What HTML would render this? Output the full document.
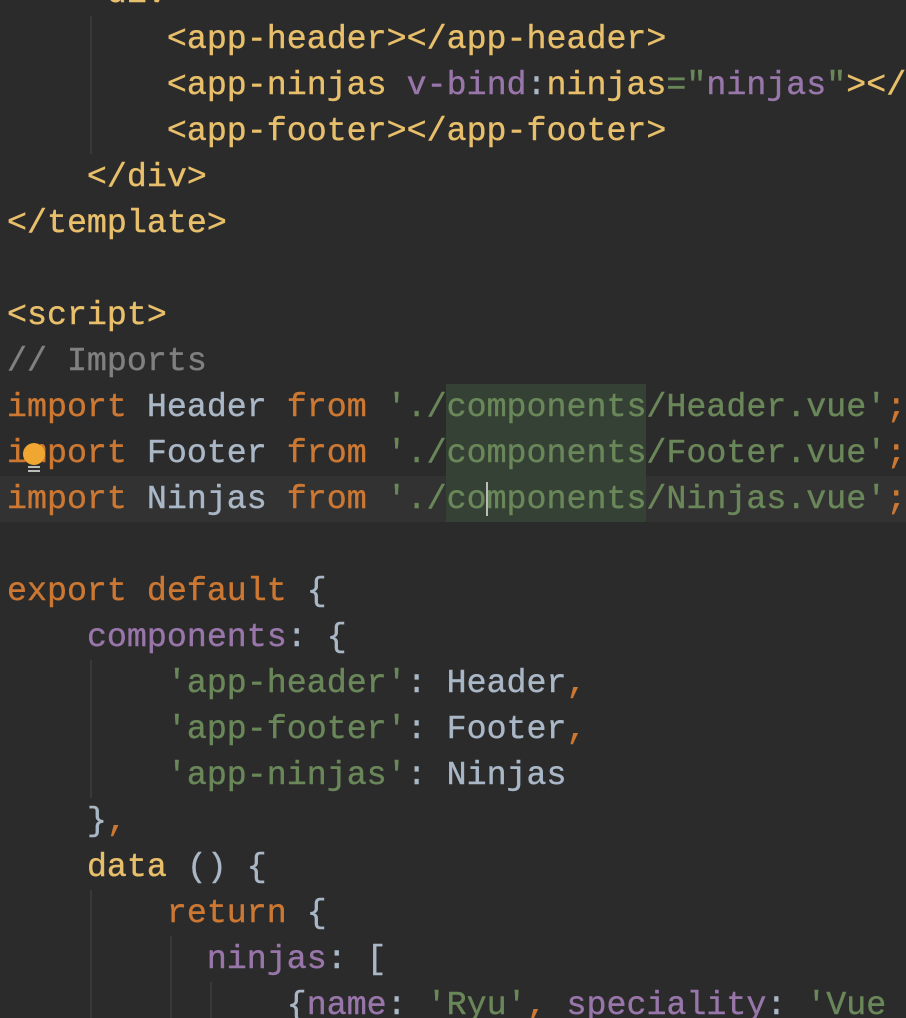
<!DOCTYPE html>
<html><head><style>
html,body{margin:0;padding:0;width:906px;height:1018px;overflow:hidden;background:#2b2b2b}
#w{position:absolute;left:0;top:0;width:906px;height:1018px;overflow:hidden}
.l{position:absolute;left:7px;height:46px;line-height:46px;font-family:"Liberation Mono",monospace;font-size:33.3px;white-space:pre;color:#a9b7c6;-webkit-text-stroke:0.4px currentColor}
.t{color:#e8bf6a}.k{color:#cc7832}.s{color:#6a8759}.p{color:#9876aa}.c{color:#808080}
.g{position:absolute;width:2px;background:#393939}
</style></head><body><div id="w">
<div style="position:absolute;left:0;top:476px;width:906px;height:46px;background:#323232"></div>
<div style="position:absolute;left:446px;top:384px;width:200px;height:138px;background:#344134"></div>
<div class="g" style="left:90px;top:16px;height:138px"></div>
<div class="g" style="left:90px;top:660px;height:138px"></div>
<div class="g" style="left:90px;top:890px;height:128px"></div>
<div class="g" style="left:170px;top:936px;height:82px"></div>
<div class="g" style="left:210px;top:982px;height:36px"></div>
<div class="l t" style="top:-30px">    &lt;div&gt;</div>
<div class="l t" style="top:16px">        &lt;app-header&gt;&lt;/app-header&gt;</div>
<div class="l" style="top:62px"><span class="t">        &lt;app-ninjas </span><span class="p">v-bind</span>:<span class="t">ninjas</span><span class="s">="</span><span class="p">ninjas</span><span class="s">"</span><span class="t">&gt;&lt;/</span></div>
<div class="l t" style="top:108px">        &lt;app-footer&gt;&lt;/app-footer&gt;</div>
<div class="l t" style="top:154px">    &lt;/div&gt;</div>
<div class="l t" style="top:200px">&lt;/template&gt;</div>
<div class="l t" style="top:292px">&lt;script&gt;</div>
<div class="l c" style="top:338px">// Imports</div>
<div class="l" style="top:384px"><span class="k">import</span> Header <span class="k">from</span> <span class="s">'./components/Header.vue'</span><span class="k">;</span></div>
<div class="l" style="top:430px"><span class="k">import</span> Footer <span class="k">from</span> <span class="s">'./components/Footer.vue'</span><span class="k">;</span></div>
<div class="l" style="top:476px"><span class="k">import</span> Ninjas <span class="k">from</span> <span class="s">'./components/Ninjas.vue'</span><span class="k">;</span></div>
<div style="position:absolute;left:486px;top:482px;width:2px;height:34px;background:#bbb"></div>
<div style="position:absolute;left:23px;top:443px;width:22px;height:22px;border-radius:50%;background:#f0a732"></div>
<div style="position:absolute;left:28px;top:466px;width:12px;height:2px;background:#bbb"></div>
<div style="position:absolute;left:28px;top:470px;width:12px;height:2px;background:#bbb"></div>
<div class="l" style="top:568px"><span class="k">export default</span> {</div>
<div class="l" style="top:614px">    <span class="p">components</span>: {</div>
<div class="l" style="top:660px">        <span class="s">'app-header'</span>: Header<span class="k">,</span></div>
<div class="l" style="top:706px">        <span class="s">'app-footer'</span>: Footer<span class="k">,</span></div>
<div class="l" style="top:752px">        <span class="s">'app-ninjas'</span>: Ninjas</div>
<div class="l" style="top:798px">    }<span class="k">,</span></div>
<div class="l" style="top:844px">    <span class="t">data</span> () {</div>
<div class="l" style="top:890px">        <span class="k">return</span> {</div>
<div class="l" style="top:936px">          <span class="p">ninjas</span>: [</div>
<div class="l" style="top:982px">              {<span class="p">name</span>: <span class="s">'Ryu'</span><span class="k">,</span> <span class="p">speciality</span>: <span class="s">'Vue</span></div>
</div></body></html>
